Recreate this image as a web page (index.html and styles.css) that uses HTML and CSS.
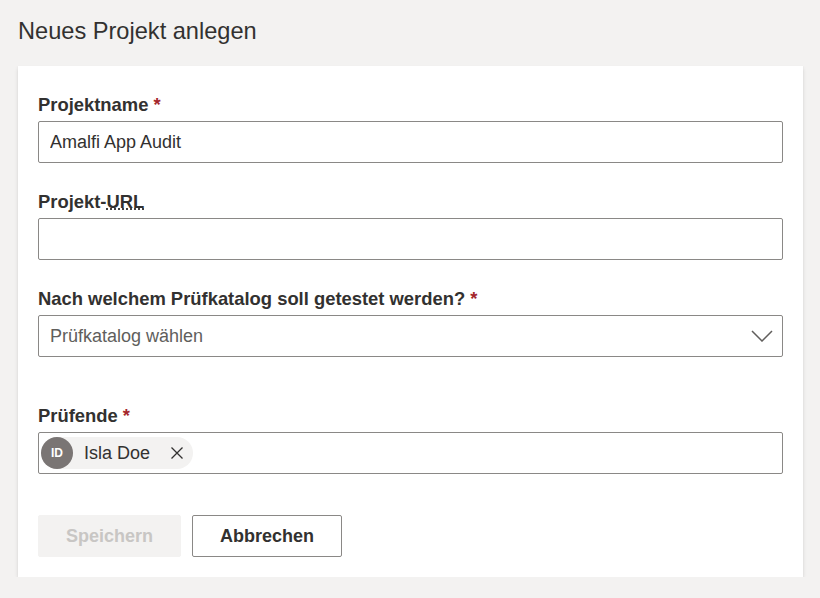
FILE: index.html
```html
<!DOCTYPE html>
<html lang="de">
<head>
  <meta charset="UTF-8" />
  <meta name="viewport" content="width=device-width, initial-scale=1.0"/>
  <title>Neues Projekt anlegen</title>
  <link rel="stylesheet" href="styles.css">
</head>
<body>
  <div class="page">
    <h1>Neues Projekt anlegen</h1>
    <form class="card">
      <div class="field">
        <label for="name">Projektname <span class="req">*</span></label>
        <input type="text" id="name" class="text-input" value="Amalfi App Audit">
      </div>
      <div class="field">
        <label for="url">Projekt-<abbr title="Uniform Resource Locator">URL</abbr></label>
        <input type="text" id="url" class="text-input">
      </div>
      <div class="field">
        <label>Nach welchem Prüfkatalog soll getestet werden? <span class="req">*</span></label>
        <div class="dropdown">
          <span class="placeholder">Prüfkatalog wählen</span>
          <svg class="chevron" width="22" height="12" viewBox="0 0 22 12">
            <path d="M1 1 L11 11 L21 1" fill="none" stroke="#605e5c" stroke-width="1.5"/>
          </svg>
        </div>
      </div>
      <div class="field field-spaced">
        <label>Prüfende <span class="req">*</span></label>
        <div class="picker">
          <div class="chip">
            <span class="avatar">ID</span>
            <span class="chip-name">Isla Doe</span>
            <span class="chip-close">
              <svg width="12" height="12" viewBox="0 0 12 12">
                <path d="M0.5 0.5 L11.5 11.5 M11.5 0.5 L0.5 11.5" stroke="#323130" stroke-width="1.3"/>
              </svg>
            </span>
          </div>
        </div>
      </div>
      <div class="actions">
        <button type="button" class="btn btn-primary" disabled>Speichern</button>
        <button type="button" class="btn">Abbrechen</button>
      </div>
    </form>
  </div>
</body>
</html>
```

FILE: styles.css
```css
body {
  margin: 0;
  background: #f3f2f1;
  color: #323130;
  font-family: "Liberation Sans", Arial, sans-serif;
  font-size: 18px;
}
.page {
  padding: 17px 0 0 18px;
}
h1 {
  margin: 0 0 21px;
  font-size: 23.6px;
  line-height: 28px;
  font-weight: normal;
}
.card {
  width: 785px;
  box-sizing: border-box;
  background: #fff;
  padding: 25px 20px 20px;
  box-shadow: 0 1.6px 3.6px rgba(0,0,0,0.132), 0 0.3px 0.9px rgba(0,0,0,0.108);
}
.field + .field {
  margin-top: 25px;
}
.field.field-spaced {
  margin-top: 45px;
}
.field label {
  display: block;
  font-weight: bold;
  font-size: 18.4px;
  line-height: 22px;
  padding: 3px 0 5px;
}
.req {
  color: #a4262c;
}
abbr {
  text-decoration: underline dotted;
}
.text-input, .dropdown, .picker {
  display: block;
  width: 100%;
  height: 42px;
  box-sizing: border-box;
  border: 1px solid #8a8886;
  border-radius: 2px;
  background: #fff;
  font-family: inherit;
  font-size: 18px;
  color: #323130;
  padding: 0 11px;
  margin: 0;
  outline: none;
}
.dropdown {
  display: flex;
  align-items: center;
  justify-content: space-between;
  padding-right: 9px;
}
.placeholder {
  color: #605e5c;
}
.picker {
  padding: 4px 2px;
}
.chip {
  display: inline-flex;
  align-items: center;
  height: 32px;
  background: #f3f2f1;
  border-radius: 16px;
}
.avatar {
  width: 32px;
  height: 32px;
  border-radius: 50%;
  background: #7a7574;
  color: #fff;
  font-size: 12px;
  font-weight: bold;
  display: flex;
  align-items: center;
  justify-content: center;
}
.chip-name {
  margin-left: 11px;
  margin-right: 11px;
}
.chip-close {
  width: 32px;
  height: 32px;
  display: flex;
  align-items: center;
  justify-content: center;
}
.actions {
  display: flex;
  gap: 11px;
  margin-top: 41px;
}
.btn {
  height: 42px;
  padding: 0 27px;
  border: 1px solid #8a8886;
  border-radius: 2px;
  background: #fff;
  color: #323130;
  font-family: inherit;
  font-size: 18px;
  font-weight: bold;
}
.btn-primary:disabled {
  background: #f3f2f1;
  border-color: #f3f2f1;
  color: #c8c6c4;
}
```
